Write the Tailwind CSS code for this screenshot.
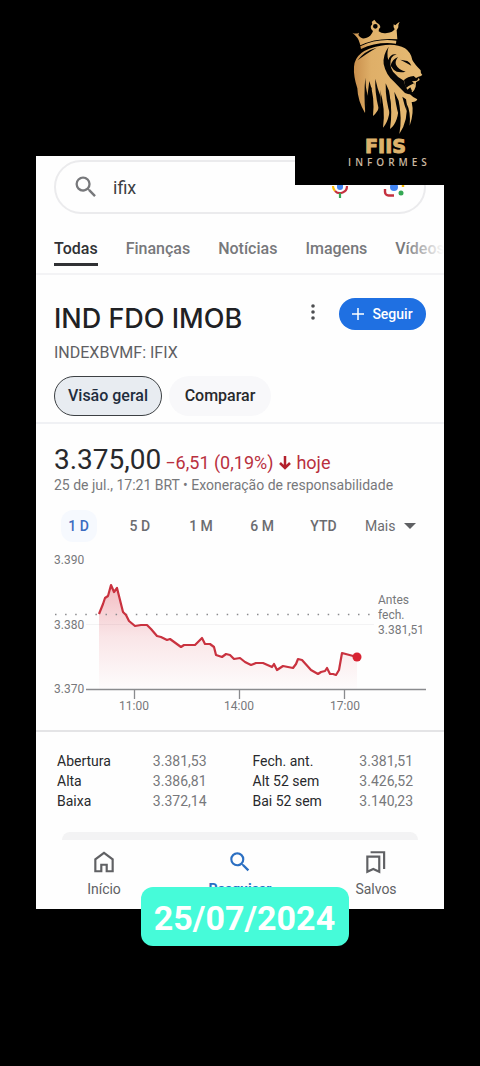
<!DOCTYPE html>
<html lang="pt-BR">
<head>
    <meta charset="UTF-8">
    <meta name="viewport" content="width=device-width, initial-scale=1.0">
    <title>IFIX - FIIS Informes</title>
    <script src="https://cdn.jsdelivr.net/npm/@tailwindcss/browser@4"></script>
</head>
<body class="bg-black font-[Roboto,sans-serif] text-[#28292c]">

    <div class="relative min-h-screen pt-[156px] pb-10">

        <main class="relative mx-9 bg-[#fefefe]">
            <!-- search -->
            <form class="px-[18px] pt-1">
                <div class="flex h-[54px] items-center rounded-full border-2 border-[#ebebed] pl-4 pr-[18px]">
                    <svg class="size-7 shrink-0 text-[#77787b]" viewBox="0 0 24 24" fill="currentColor"><path d="M15.5 14h-.79l-.28-.27A6.47 6.47 0 0 0 16 9.5 6.5 6.5 0 1 0 9.5 16c1.61 0 3.09-.59 4.23-1.57l.27.28v.79l5 4.99L20.49 19l-4.99-5zm-6 0C7.01 14 5 11.99 5 9.5S7.01 5 9.5 5 14 7.01 14 9.5 11.99 14 9.5 14z"/></svg>
                    <label for="q" class="sr-only">Pesquisar</label>
                    <input id="q" type="text" value="ifix" class="ml-[13px] h-full min-w-0 flex-1 text-lg text-[#3c4043] outline-none">
                    <button type="button" aria-label="Pesquisa por voz" class="mr-[30px]">
                        <svg class="size-6" viewBox="0 0 24 24" fill="none" stroke-width="2.2">
                            <rect x="9" y="2" width="6" height="13" rx="3" fill="#4285f4"/>
                            <path d="M5 11a7 7 0 0 0 2 5" stroke="#fbbc04"/>
                            <path d="M7 16a7 7 0 0 0 12-5" stroke="#c5313f"/>
                            <path d="M12 18v5" stroke="#34a853"/>
                        </svg>
                    </button>
                    <button type="button" aria-label="Pesquisa por imagem">
                        <svg class="size-6" viewBox="0 0 24 24" fill="none" stroke-width="2.4">
                            <circle cx="12" cy="12" r="4" fill="#4285f4"/>
                            <path d="M3 14v3A3.500 3.500 0 0 0 6.500 20.500H12" stroke="#c5313f"/>
                            <path d="M3 10V7.500A3.500 3.500 0 0 1 6.500 4H9" stroke="#c5313f"/>
                            <path d="M15 4h2.500A3.500 3.500 0 0 1 21 7.500V12" stroke="#fbbc04"/>
                            <circle cx="19" cy="18" r="2.500" fill="#34a853"/>
                        </svg>
                    </button>
                </div>
            </form>

            <!-- tabs -->
            <nav class="relative flex h-[61px] items-start gap-7 overflow-hidden border-b-2 border-[#f3f3f5] pl-[18px] pt-[23px] text-base font-medium whitespace-nowrap text-[#77787b]">
                <a href="#" class="h-[29px] border-b-[3px] border-[#303134] text-[#303134]">Todas</a>
                <a href="#">Finanças</a>
                <a href="#">Notícias</a>
                <a href="#">Imagens</a>
                <a href="#">Vídeos</a>
                <div class="absolute inset-y-0 right-0 w-10 bg-linear-to-r from-transparent to-[#fefefe]"></div>
            </nav>

            <!-- heading -->
            <section class="border-b-2 border-[#f0f1f4] px-[18px] pt-[23px] pb-[6px]">
                <div class="flex items-start">
                    <div class="flex-1">
                        <h1 class="font-[Inter,sans-serif] text-[27px] leading-[42px] font-medium text-[#202124]">IND FDO IMOB</h1>
                        <p class="mt-px text-base leading-6 text-[#5f6063]">INDEXBVMF: IFIX</p>
                    </div>
                    <button type="button" aria-label="Mais opções" class="mt-1 mr-4 text-[#4d4e51]">
                        <svg class="h-5 w-5" viewBox="0 0 20 20" fill="currentColor"><circle cx="10" cy="4" r="1.800"/><circle cx="10" cy="10" r="1.800"/><circle cx="10" cy="16" r="1.800"/></svg>
                    </button>
                    <button type="button" class="flex h-8 w-[87px] items-center justify-center gap-2 rounded-full bg-[#1f70e2] text-sm font-medium text-white">
                        <svg class="size-3" viewBox="0 0 12 12" fill="none" stroke="currentColor" stroke-width="1.500"><path d="M6 0v12M0 6h12"/></svg>
                        Seguir
                    </button>
                </div>
                <div class="mt-[11px] flex gap-[7px] text-base font-medium">
                    <button type="button" class="h-10 w-[108px] rounded-full border border-[#3c4043] bg-[#e8ecf1] text-[#1f2d3d]">Visão geral</button>
                    <button type="button" class="h-10 w-[102px] rounded-full bg-[#f8f8fa]">Comparar</button>
                </div>
            </section>

            <!-- quote -->
            <section class="border-b-2 border-[#e4e4e6] px-[18px] pt-5 pb-3">
                <div class="flex items-baseline gap-1 leading-8 whitespace-nowrap">
                    <span class="text-[28px]">3.375,00</span>
                    <span class="text-lg leading-8 text-[#b9303e]">−6,51 (0,19%)
                        <svg class="inline size-[14px] align-[-1px]" viewBox="0 0 14 14" fill="none" stroke="#b3202c" stroke-width="2.500"><path d="M7 0v12M2 7 7 12l5-5"/></svg>
                        hoje</span>
                </div>
                <p class="-mt-1 text-sm leading-5 text-[#77787b]">25 de jul., 17:21 BRT • Exoneração de responsabilidade</p>

                <div class="mt-[15px] flex text-sm font-medium text-[#6b6c70]">
                    <div class="mr-[11px] -ml-[6px] grid flex-1 grid-cols-5 justify-items-center">
                        <button type="button" class="h-8 w-9 rounded-xl bg-[#f6f9fe] text-[#3b6bc0]">1 D</button>
                        <button type="button" class="h-8">5 D</button>
                        <button type="button" class="h-8">1 M</button>
                        <button type="button" class="h-8">6 M</button>
                        <button type="button" class="h-8">YTD</button>
                    </div>
                    <div class="relative flex w-[61px] items-center">
                        <label for="periodo" class="sr-only">Mais períodos</label>
                        <select id="periodo" class="h-8 w-full appearance-none font-normal outline-none">
                            <option>Mais</option>
                        </select>
                        <svg class="pointer-events-none absolute right-[10px] h-[6px] w-3" viewBox="0 0 12 6" fill="#5f6063"><path d="M0 0h12L6 6z"/></svg>
                    </div>
                </div>

                <svg class="mt-2 block w-full" viewBox="0 0 372 168">
                    <defs>
                        <linearGradient id="fade" x1="0" y1="0" x2="0" y2="1">
                            <stop offset="0" stop-color="#d93040" stop-opacity=".32"/>
                            <stop offset=".5" stop-color="#d93040" stop-opacity=".12"/>
                            <stop offset="1" stop-color="#d93040" stop-opacity=".01"/>
                        </linearGradient>
                    </defs>
                    <path d="M32 74.500H320" stroke="#f3f3f4"/>
                    <path d="M45 64 49 54 51 48 54 46 57 34 60 42 63 38 69 62 72 65 75 71 81 76 87 75 93 75 97 79 103 86 107 87 113 90 116 89 127 98 130 95 139 95 141 95 148 88 151 94 156 94 160 97 162 105 168 107 172 104 176 105 180 109 186 108 191 112 197 115 202 113 209 113 218 117 220 114 223 120 229 116 239 118 242 114 244 109 248 110 257 120 264 124 267 122 271 121 273 118 276 124 279 124 282 125 285 120 288 103 303 107V139H45Z" fill="url(#fade)"/>
                    <path d="M1 64.500H320" stroke="#8a8b8e" stroke-width="1.500" stroke-dasharray="1.500 8.600"/>
                    <path d="M45 64 49 54 51 48 54 46 57 35 60 42 63 38 69 62 72 65 75 71 81 76 87 75 93 75 97 79 103 86 107 87 113 90 116 89 127 97 130 95 139 95 141 95 148 88 151 94 156 94 160 97 162 105 168 107 172 104 176 105 180 109 186 108 191 112 197 115 202 113 209 113 218 117 220 114 223 120 229 116 239 118 242 114 244 109 248 110 257 120 264 124 267 122 271 121 273 118 276 124 279 124 282 125 285 120 288 103 303 107" fill="none" stroke="#c9323f" stroke-width="2.200" stroke-linejoin="round"/>
                    <circle cx="303" cy="107" r="4.500" fill="#d82433"/>
                    <path d="M32 139.500H372M80.500 139V149M185.500 139V149M290.500 139V149" fill="none" stroke="#8a8b8e" stroke-width="1.300"/>
                    <g fill="#77787b" font-size="12">
                        <text x="0" y="14">3.390</text>
                        <text x="0" y="79">3.380</text>
                        <text x="0" y="143">3.370</text>
                        <text x="80" y="160" text-anchor="middle">11:00</text>
                        <text x="185" y="160" text-anchor="middle">14:00</text>
                        <text x="291" y="160" text-anchor="middle">17:00</text>
                        <text x="324" y="54">Antes</text>
                        <text x="324" y="69">fech.</text>
                        <text x="324" y="84">3.381,51</text>
                    </g>
                </svg>
            </section>

            <!-- stats -->
            <div class="mt-[19px] pr-[31px] pl-[21px]">
                <table class="w-full table-fixed text-left text-sm leading-5">
                    <colgroup><col class="w-[22%]"><col class="w-[20%]"><col class="w-[36%]"><col class="w-[22%]"></colgroup>
                    <tbody>
                        <tr>
                            <th class="font-normal">Abertura</th><td class="text-right text-[#77787b]">3.381,53</td>
                            <th class="pl-[46px] font-normal">Fech. ant.</th><td class="text-right text-[#77787b]">3.381,51</td>
                        </tr>
                        <tr>
                            <th class="font-normal">Alta</th><td class="text-right text-[#77787b]">3.386,81</td>
                            <th class="pl-[46px] font-normal">Alt 52 sem</th><td class="text-right text-[#77787b]">3.426,52</td>
                        </tr>
                        <tr>
                            <th class="font-normal">Baixa</th><td class="text-right text-[#77787b]">3.372,14</td>
                            <th class="pl-[46px] font-normal">Bai 52 sem</th><td class="text-right text-[#77787b]">3.140,23</td>
                        </tr>
                    </tbody>
                </table>
            </div>
            <div class="mx-[26px] mt-[21px] h-2 rounded-t-2xl bg-[#f3f3f4]"></div>

            <!-- bottom bar -->
            <nav class="grid h-[69px] grid-cols-3 text-sm text-[#606164]">
                <a href="#" class="flex flex-col items-center pt-[9px]">
                    <svg class="size-[26px]" viewBox="0 0 24 24" fill="none" stroke="currentColor" stroke-width="2"><path d="M4 20.500V9.500L12 3.500l8 6v11h-5.500v-6h-5v6z"/></svg>
                    <span class="mt-1 leading-5">Início</span>
                </a>
                <a href="#" class="flex flex-col items-center pt-[9px] font-bold text-[#2b6fc2]">
                    <svg class="size-[26px]" viewBox="0 0 24 24" fill="currentColor"><path d="M15.500 14h-.79l-.28-.27A6.47 6.47 0 0 0 16 9.500 6.500 6.500 0 1 0 9.500 16c1.610 0 3.090-.59 4.230-1.570l.27.28v.79l5 4.990L20.490 19l-4.990-5zm-6 0C7.010 14 5 11.990 5 9.500S7.010 5 9.500 5 14 7.010 14 9.500 11.990 14 9.500 14z"/></svg>
                    <span class="mt-1 leading-5">Pesquisar</span>
                </a>
                <a href="#" class="flex flex-col items-center pt-[9px]">
                    <svg class="size-[26px]" viewBox="0 0 24 24" fill="none" stroke="currentColor" stroke-width="2"><path d="M4 7h11v14l-5.500-2.500L4 21z"/><path d="M7 3h12.500v15.500"/></svg>
                    <span class="mt-1 leading-5">Salvos</span>
                </a>
            </nav>

            <!-- date sticker -->
            <div class="absolute inset-x-0 -bottom-[37px] flex justify-center pl-[9px]">
                <time datetime="2024-07-25" class="flex h-[59px] w-[208px] items-center justify-center rounded-xl bg-[#46fbd9] pt-1 text-[34px] font-bold text-white">25/07/2024</time>
            </div>
        </main>

        <!-- logo -->
        <div class="absolute top-0 right-0 flex h-[185px] w-[185px] flex-col items-center bg-black">
            <svg class="h-[138px] w-full shrink-0" viewBox="15 0 555 414">
                <defs>
                    <linearGradient id="gold" x1="0" y1="0" x2="1" y2="0">
                        <stop offset="0" stop-color="#c98f4c"/>
                        <stop offset=".25" stop-color="#dfaf68"/>
                        <stop offset="1" stop-color="#e6bb74"/>
                    </linearGradient>
                </defs>
                <g fill="url(#gold)">
                    <!-- crown -->
                    <path fill-rule="evenodd" d="M187 98Q198 103 207 98L205 105Q214 119 228 114Q244 109 249 93Q240 85 243 77Q249 73 245 66L253 59L260 68Q271 73 271 82Q264 88 266 94Q276 102 291 99Q309 97 314 88Q309 80 311 73L316 76Q321 70 329 65Q324 74 325 82L320 91L322 118Q260 112 211 136L209 129Q206 113 187 98ZM256 72A7 7 0 1 0 256 86A7 7 0 1 0 256 72Z"/>
                    <path d="M211 139Q262 114 319 122L318 131Q262 124 213 147Z"/>
                    <!-- mane -->
                    <path d="M192 200Q195 150 272 137Q317 129 345 145Q363 157 367 180Q374 193 392 211Q391 221 397 225L386 232L389 240L378 247L377 260Q373 273 366 278Q357 270 351 263Q358 288 382 298Q378 307 365 306Q373 339 359 377Q363 335 349 309Q356 360 328 402Q337 354 326 309Q327 367 300 387Q308 335 299 288Q305 354 279 383Q287 326 270 270Q280 322 249 348Q255 291 238 243Q232 292 225 339Q203 302 202 265Q190 228 192 200Z"/>
                </g>
                <g fill="#050505">
                    <!-- gaps between the locks -->
                    <path d="M226 233Q221 280 226 342Q233 290 246 262Q236 268 233 288Q226 262 226 233ZM256 236Q254 275 265 322Q266 350 278 380Q271 325 272 290Q262 266 256 236ZM287 250Q286 300 302 350Q303 300 297 272ZM313 275Q317 315 326 345Q331 325 326 302ZM337 290Q343 315 350 333Q352 312 348 298Z"/>
                    <path d="M203 181Q222 153 260 143Q224 164 203 181Z"/>
                    <!-- face -->
                    <path d="M296 140Q278 165 281 192Q288 226 313 246Q330 264 345 279Q362 287 378 280L366 276Q346 268 342 242Q322 232 309 215Q296 195 304 174Q308 166 320 163Q301 160 295 180Q289 160 296 140Z"/>
                    <path d="M302 197Q306 178 324 171Q314 184 318 194Q325 209 347 215Q322 220 311 209Z"/>
                    <path d="M331 179L352 183Q361 188 364 197Q350 189 331 179Z"/>
                    <path d="M342 240Q353 230 371 228L378 234L390 228L381 242L366 244L374 252L364 260Q371 270 363 277Q346 272 342 240Z"/>
                </g>
                <path d="M349 263L356 258L372 250Q374 269 366 273L361 262L352 269Z" fill="#e6bb74"/>
            </svg>
            <strong class="-ml-1 font-['DejaVu_Sans',sans-serif] text-[19px] leading-4 font-bold text-[#deb16b] [-webkit-text-stroke:1px_#deb16b]">FIIS</strong>
            <span class="ml-1 font-['Open_Sans',sans-serif] text-[10px] leading-4 font-semibold tracking-[4px] text-[#cbb9a0]">INFORMES</span>
        </div>
    </div>

</body>
</html>
